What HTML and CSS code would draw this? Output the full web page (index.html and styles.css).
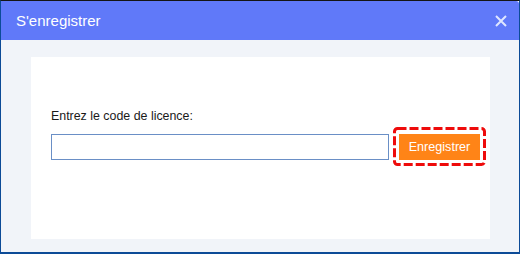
FILE: index.html
```html
<!DOCTYPE html>
<html lang="fr">
<head>
    <meta charset="UTF-8">
    <title>S'enregistrer</title>
    <link rel="stylesheet" href="styles.css">
</head>
<body>
    <div class="window">
        <div class="titlebar">
            <span class="title">S'enregistrer</span>
            <svg class="close" width="12" height="12" viewBox="0 0 12 12">
                <path d="M1 1 L11 11 M11 1 L1 11" stroke="#dfe6ff" stroke-width="2" fill="none"/>
            </svg>
        </div>
        <div class="content">
            <div class="card">
                <label class="label" for="code">Entrez le code de licence:</label>
                <div class="row">
                    <input class="code-input" id="code" type="text">
                    <div class="btn-wrap">
                        <svg class="dash" width="93" height="39" viewBox="0 0 93 39">
                            <rect x="1.5" y="1.5" width="90" height="36" rx="3" fill="none" stroke="#ee0b0b" stroke-width="3" stroke-dasharray="9 3"/>
                        </svg>
                        <button class="register-btn">Enregistrer</button>
                    </div>
                </div>
            </div>
        </div>
    </div>
</body>
</html>
```

FILE: styles.css
```css
* {
    margin: 0;
    padding: 0;
    box-sizing: border-box;
}

body {
    background: #fff;
    font-family: "Liberation Sans", Arial, sans-serif;
}

.window {
    width: 520px;
    height: 254px;
    display: flex;
    flex-direction: column;
    border-top: 1px solid #151515;
    border-left: 1px solid #0c4b97;
    border-right: 1px solid #0c4b97;
    border-bottom: 2px solid #0c4b97;
}

.titlebar {
    height: 39px;
    flex-shrink: 0;
    display: flex;
    align-items: center;
    justify-content: space-between;
    padding: 0 12px 0 15px;
    background: #6079f9;
    border-top-right-radius: 3px;
}

.title {
    color: #fff;
    font-size: 15px;
    padding-bottom: 1px;
}

.close {
    display: block;
}

.content {
    flex: 1;
    display: flex;
    padding: 17px 29px 13px 30px;
    background: #f1f4f9;
}

.card {
    flex: 1;
    background: #fff;
    padding: 51px 0 0 20px;
}

.label {
    display: block;
    font-size: 12.4px;
    line-height: 16px;
    color: #1a1a1a;
}

.row {
    display: flex;
    align-items: center;
    gap: 4px;
    margin-top: 3px;
}

.code-input {
    width: 338px;
    height: 26px;
    border: 1px solid #6a8fc6;
    outline: none;
    background: #fff;
}

.btn-wrap {
    position: relative;
    width: 93px;
    height: 39px;
    padding: 7px 6px 6px 6px;
}

.dash {
    position: absolute;
    top: 0;
    left: 0;
}

.register-btn {
    width: 81px;
    height: 26px;
    border: none;
    background: #ff8417;
    color: #fff;
    font-family: "Liberation Sans", Arial, sans-serif;
    font-size: 12.6px;
}
```
